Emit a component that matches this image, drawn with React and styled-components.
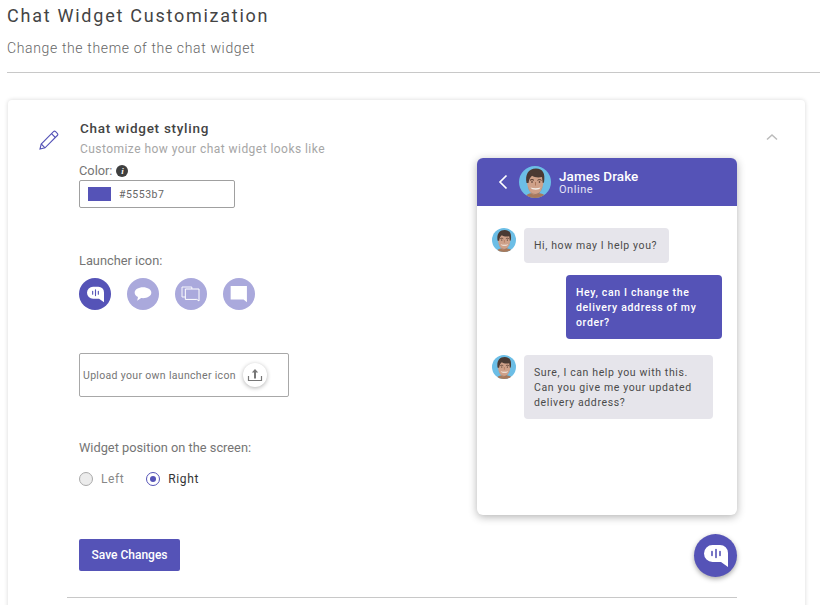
import React from "react";
import styled, { createGlobalStyle } from "styled-components";

const brand = "#5553b7";
const soft = "#aaa9dc";

const Global = createGlobalStyle`
  html, body { margin: 0; padding: 0; background: #fff; }
  body { font-family: Roboto, "Liberation Sans", sans-serif; height: 605px; overflow: hidden; }
  * { box-sizing: border-box; }
`;
const Page = styled.div`height: 605px; overflow: hidden; padding: 5px 0 0 7px;`;
const Title = styled.h1`margin: 0; font-size: 18px; line-height: 22px; font-weight: 400; letter-spacing: 1.75px; color: #444;`;
const Subtitle = styled.p`margin: 10px 0 0; font-size: 14px; line-height: 22px; font-weight: 300; letter-spacing: 0.64px; color: #666;`;
const Rule = styled.hr`margin: 13px 0 0; border: 0; border-top: 1px solid #c8c8c8;`;
const Card = styled.section`
  margin: 27px 0 0 1px; width: 797px; height: 560px; background: #fff; border-radius: 4px;
  box-shadow: 0 0 4px rgba(0,0,0,.16);
`;
const Header = styled.header`display: flex; height: 58px; padding: 20px 27px 0 31px;`;
const HeadIcon = styled.div`width: 41px; padding-top: 10px; line-height: 0;`;
const HeadText = styled.div`flex: 1;`;
const HeadTitle = styled.h2`margin: 0; font-size: 13.5px; line-height: 16px; font-weight: 500; letter-spacing: 0.72px; color: #444;`;
const HeadSub = styled.p`margin: 5px 0 0; font-size: 12px; line-height: 16px; letter-spacing: 0.45px; color: #a6a6a6;`;
const Chevron = styled.svg`width: 12px; height: 8px; margin-top: 13px;`;
const Body = styled.div`display: flex; justify-content: space-between; padding: 0 68px 0 71px;`;
const Left = styled.div`width: 260px; padding-top: 5px;`;
const Label = styled.div`display: flex; align-items: center; gap: 4px; font-size: 12.8px; line-height: 16px; color: #757575;`;
const InfoDot = styled.span`
  width: 12px; height: 12px; border-radius: 50%; background: #3f3f3f; color: #fff;
  font: italic 700 9px/12px "Liberation Serif", serif; text-align: center;
`;
const ColorField = styled.div`
  display: flex; align-items: center; gap: 8px; margin-top: 1px; width: 156px; height: 28px;
  border: 1px solid #a0a0a0; border-radius: 2px; padding-left: 8px;
  font-size: 10.5px; letter-spacing: 0.5px; color: #666;
`;
const Swatch = styled.span`width: 23px; height: 14px; background: ${brand};`;
const LauncherLabel = styled(Label)`margin-top: 45px;`;
const IconRow = styled.div`display: flex; gap: 16px; margin-top: 9px;`;
const IconCircle = styled.div`
  width: 32px; height: 32px; border-radius: 50%; display: flex; align-items: center; justify-content: center;
  background: ${p => (p.$active ? brand : soft)};
`;
const UploadBox = styled.div`
  display: flex; align-items: center; gap: 7px; margin-top: 43px; width: 210px; height: 44px;
  border: 1px solid #a8a8a8; border-radius: 2px; padding-left: 3px;
  font-size: 10.5px; letter-spacing: 0.33px; color: #757575;
`;
const UploadBtn = styled.div`
  width: 24px; height: 24px; border-radius: 50%; background: #fff; display: flex; align-items: center; justify-content: center;
  box-shadow: 0 1px 4px rgba(0,0,0,.3);
`;
const PositionLabel = styled(Label)`margin-top: 43px;`;
const Radios = styled.div`display: flex; align-items: center; gap: 22px; margin-top: 15px;`;
const RadioItem = styled.div`
  display: flex; align-items: center; gap: 8px; font-size: 12px; line-height: 16px; letter-spacing: 0.6px;
  color: ${p => (p.$on ? "#333" : "#888")};
`;
const RadioMark = styled.span`
  width: 14px; height: 14px; border-radius: 50%; display: flex; align-items: center; justify-content: center;
  border: 1px solid ${p => (p.$on ? brand : "#aaa")}; background: ${p => (p.$on ? "#fff" : "#ececec")};
  &::after { content: ""; width: 6px; height: 6px; border-radius: 50%; background: ${p => (p.$on ? brand : "transparent")}; }
`;
const SaveButton = styled.button`
  display: block; margin-top: 52px; width: 101px; height: 32px; border: 0; border-radius: 2px; background: ${brand};
  color: #fff; font: 500 12px Roboto, sans-serif; letter-spacing: 0;
`;
const Right = styled.div`width: 260px; display: flex; flex-direction: column; align-items: flex-end;`;
const Chat = styled.div`
  width: 260px; height: 357px; border-radius: 6px; overflow: hidden; background: #fff;
  box-shadow: 0 2px 8px rgba(0,0,0,.3);
`;
const ChatHead = styled.div`display: flex; align-items: center; height: 48px; background: ${brand}; padding-left: 21px; color: #fff;`;
const BackIcon = styled.svg`width: 10px; height: 16px; margin-right: 11px;`;
const PersonName = styled.div`font-size: 13.5px; line-height: 14px; font-weight: 500; letter-spacing: 0.05px;`;
const PersonStatus = styled.div`margin-top: 1px; font-size: 11px; line-height: 12px; letter-spacing: 0.55px; color: #e4e4f6;`;
const PersonText = styled.div`margin-left: 8px; padding-top: 1px;`;
const Messages = styled.div`display: flex; flex-direction: column; padding: 22px 15px 0;`;
const Msg = styled.div`display: flex; align-items: flex-start; gap: 8px; margin-top: ${p => p.$top}px; justify-content: ${p => (p.$me ? "flex-end" : "flex-start")};`;
const Bubble = styled.div`
  width: ${p => p.$w}px; padding: ${p => (p.$lines ? "9.500px 10px" : "10px")}; border-radius: 4px; font-size: 10.5px; line-height: 15px;
  letter-spacing: ${p => (p.$me ? "0.66px" : "0.62px")};
  font-weight: ${p => (p.$me ? 500 : 400)};
  background: ${p => (p.$me ? brand : "#e6e5eb")}; color: ${p => (p.$me ? "#fff" : "#4a4a4a")};
`;
const Fab = styled.div`
  margin-top: 19px; width: 43px; height: 43px; border-radius: 50%; background: ${brand}; display: flex; align-items: center; justify-content: center;
  box-shadow: 0 2px 5px rgba(0,0,0,.35);
`;
const BottomRule = styled.hr`margin: 20px 68px 0 59px; border: 0; border-top: 1px solid #c8c8c8;`;

function Face({ size }) {
  return (
    <svg width={size} height={size} viewBox="0 0 32 32" style={{ flex: "none" }}>
      <defs><clipPath id={`c${size}`}><circle cx="16" cy="16" r="16" /></clipPath></defs>
      <g clipPath={`url(#c${size})`}>
        <rect width="32" height="32" fill="#6cbee6" />
        <path d="M6 32c1-4 4-5 10-5s10 1 12 5z" fill="#a87a5c" />
        <path d="M8 15c0-6 3-9 9-9s8 4 7.500 9.500C24 23 20.500 29 16 29S8 22 8 15z" fill="#cfa189" />
        <path d="M7.500 17C6 9 9 2.500 17 2.500c7 0 9.500 5 8 14l-1.300.5-.7-6c-4 .8-7.500.3-10-1.300C11 11.500 10 13.500 9.500 17z" fill="#4a3a33" />
        <path d="M11 14.300c1.300-.9 2.700-.9 4 0M18.500 14.300c1.300-.9 2.700-.9 4 0" fill="none" stroke="#4a3328" strokeWidth="1" />
        <circle cx="13" cy="16" r=".8" fill="#3a2720" />
        <circle cx="20.500" cy="16" r=".8" fill="#3a2720" />
        <path d="M16.500 16v3.500" stroke="#a97355" strokeWidth=".9" />
        <path d="M11.500 21.500c3 1 7 1 10 0-1 3-8.500 3-10 0z" fill="#f4efe9" />
        <path d="M9 20c1 5 4 9 7.500 9s6-4 7-9c-.5 10-13.500 11-14.500 0z" fill="#6f4e3e" opacity=".45" />
      </g>
    </svg>
  );
}
function Voice({ w, bg }) {
  return (
    <svg width={w} height={w} viewBox="0 0 24 24">
      <path d="M8.500 1h7.500a8 8 0 0 1 8 8V23l-7-5H8.500A8.500 8.500 0 0 1 8.500 1z" fill="#fff" />
      <path d="M8 7.500v4M12 5.500v8M16 7.500v4" stroke={bg} strokeWidth="1.600" strokeLinecap="round" />
    </svg>
  );
}
const I = ({ children }) => <svg width="20" height="20" viewBox="0 0 24 24">{children}</svg>;

export default function App() {
  return (
    <Page>
      <Global />
      <Title>Chat Widget Customization</Title>
      <Subtitle>Change the theme of the chat widget</Subtitle>
      <Rule />
      <Card>
        <Header>
          <HeadIcon>
            <svg width="20" height="20" viewBox="0 0 20 20" fill="none" stroke={brand} strokeWidth="1.100">
              <path d="M1 19l1.200-5L14.500 1.700a1.500 1.500 0 0 1 2.100 0l1.700 1.700a1.500 1.500 0 0 1 0 2.100L6 17.800z" />
              <path d="M12.500 3.700l3.800 3.800M2.200 14L6 17.800" />
            </svg>
          </HeadIcon>
          <HeadText>
            <HeadTitle>Chat widget styling</HeadTitle>
            <HeadSub>Customize how your chat widget looks like</HeadSub>
          </HeadText>
          <Chevron viewBox="0 0 12 8"><path d="M1 6.500 6 2l5 4.500" fill="none" stroke="#bbb" strokeWidth="1.500" /></Chevron>
        </Header>
        <Body>
          <Left>
            <Label>Color: <InfoDot>i</InfoDot></Label>
            <ColorField><Swatch />#5553b7</ColorField>
            <LauncherLabel>Launcher icon:</LauncherLabel>
            <IconRow>
              <IconCircle $active><Voice w={17} bg={brand} /></IconCircle>
              <IconCircle><I><path d="M12 4c5.500 0 10 2.800 10 6.500S17.500 17 12 17c-.8 0-1.500 0-2.200-.1L5 20l1-4.300C3.600 14.500 2 12.600 2 10.500 2 6.800 6.500 4 12 4z" fill="#fff" /></I></IconCircle>
              <IconCircle><I>
                <path d="M5.200 15.600H1.200V3.600H13V6" fill="none" stroke="#fff" strokeWidth="1.100" />
                <path d="M5.200 6H21.600V20.400L19 18.500H5.200z" fill="none" stroke="#fff" strokeWidth="1.200" />
              </I></IconCircle>
              <IconCircle><I><path d="M2 2.500h19.500v19.500l-4-3.500H2z" fill="#fff" /></I></IconCircle>
            </IconRow>
            <UploadBox>
              Upload your own launcher icon
              <UploadBtn>
                <svg width="16" height="16" viewBox="0 0 16 16" fill="none" stroke="#777">
                  <path d="M1.500 9v4.500h13V9" strokeWidth="1.200" />
                  <path d="M8 11.500V3" strokeWidth="2" />
                  <path d="M4.800 5.500 8 2l3.200 3.500z" fill="#777" strokeWidth="0" />
                </svg>
              </UploadBtn>
            </UploadBox>
            <PositionLabel>Widget position on the screen:</PositionLabel>
            <Radios>
              <RadioItem><RadioMark />Left</RadioItem>
              <RadioItem $on><RadioMark $on />Right</RadioItem>
            </Radios>
            <SaveButton>Save Changes</SaveButton>
          </Left>
          <Right>
            <Chat>
              <ChatHead>
                <BackIcon viewBox="0 0 10 16"><path d="M8.500 1.500 2 8l6.500 6.500" fill="none" stroke="#fff" strokeWidth="1.700" /></BackIcon>
                <Face size={32} />
                <PersonText>
                  <PersonName>James Drake</PersonName>
                  <PersonStatus>Online</PersonStatus>
                </PersonText>
              </ChatHead>
              <Messages>
                <Msg $top={0}><Face size={24} /><Bubble $w={145}>Hi, how may I help you?</Bubble></Msg>
                <Msg $top={12} $me><Bubble $me $lines $w={156}>Hey, can I change the delivery address of my order?</Bubble></Msg>
                <Msg $top={16}><Face size={24} /><Bubble $lines $w={189}>Sure, I can help you with this. Can you give me your updated delivery address?</Bubble></Msg>
              </Messages>
            </Chat>
            <Fab><Voice w={24} bg={brand} /></Fab>
          </Right>
        </Body>
        <BottomRule />
      </Card>
    </Page>
  );
}
